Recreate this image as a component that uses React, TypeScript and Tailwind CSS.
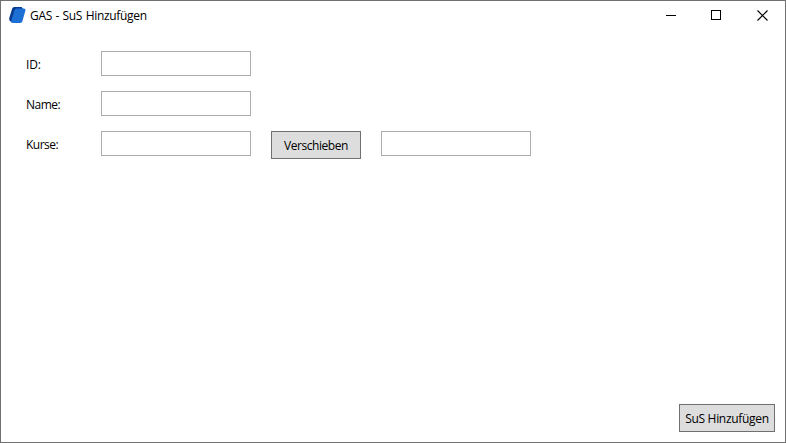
import type { ReactNode } from "react";

function Label({ children, spacing }: { children: ReactNode; spacing: string }) {
  return <label className={`w-[75px] shrink-0 pt-[5px] leading-[17px] ${spacing}`}>{children}</label>;
}

function TextBox({ label }: { label: string }) {
  return (
    <input
      type="text"
      aria-label={label}
      className="h-[25px] w-[150px] shrink-0 border border-[#abadb3] bg-white px-1 outline-none"
    />
  );
}

function Button({ children, size }: { children: ReactNode; size: string }) {
  return (
    <button className={`flex h-7 shrink-0 items-center justify-center border border-[#707070] bg-[#dddddd] pt-px leading-4 whitespace-nowrap ${size}`}>
      {children}
    </button>
  );
}

function TitleBar() {
  return (
    <header className="flex h-[30px] items-center justify-between">
      <div className="flex items-center pl-2">
        <svg width="18" height="18" viewBox="0 0 18 18" className="-mt-0.5">
          <path d="M5.2 1H12.6L14 3 5.5 16H2Q-.3 14.5.2 12.3L3.2 2.5Q3.7 1 5.2 1Z" fill="#063b8f" />
          <path d="M7.6 2.4H14.9Q16.9 2.4 16.4 4.4L13.4 15.3Q12.9 17 11.2 17H3.7Q1.7 17 2.2 15L5.5 4Q6 2.4 7.6 2.4Z" fill="#1c70d3" />
        </svg>
        <span className="ml-[3px] whitespace-nowrap tracking-[-0.32px] [word-spacing:0.75px]">GAS - SuS Hinzufügen</span>
      </div>
      <div className="flex h-full pt-[9px]">
        {["M.5 5.5H10.5", "M.5.5H9.5V9.5H.5Z", "M.5.5L10.5 10.5M10.5.5L.5 10.5"].map((path, index) => (
          <div key={path} className={index === 2 ? "w-7" : "w-[46px]"}>
            <svg width="11" height="11" viewBox="0 0 11 11" fill="none" stroke="black" strokeWidth={index === 2 ? 1.15 : 1} shapeRendering={index === 2 ? "auto" : "crispEdges"}>
              <path d={path} />
            </svg>
          </div>
        ))}
      </div>
    </header>
  );
}

export default function App() {
  return (
    <main className="flex h-[443px] w-[786px] flex-col overflow-hidden border border-[#707070] bg-white font-['Open_Sans','Noto_Sans',sans-serif] text-xs text-black">
      <TitleBar />
      <form className="flex flex-1 flex-col gap-[15px] pt-5 pr-2.5 pb-2.5 pl-[25px]" onSubmit={(event) => event.preventDefault()}>
        <div className="flex h-[25px]"><Label spacing="tracking-[-0.2px]">ID:</Label><TextBox label="ID" /></div>
        <div className="flex h-[25px]"><Label spacing="tracking-[-0.5px]">Name:</Label><TextBox label="Name" /></div>
        <div className="flex items-start">
          <Label spacing="tracking-[-0.5px]">Kurse:</Label>
          <TextBox label="Kurse" />
          <div className="mx-5"><Button size="w-[90px] tracking-[-0.45px]">Verschieben</Button></div>
          <TextBox label="Ausgewählte Kurse" />
        </div>
        <div className="mt-auto self-end"><Button size="w-24 tracking-[-0.3px]">SuS Hinzufügen</Button></div>
      </form>
    </main>
  );
}
